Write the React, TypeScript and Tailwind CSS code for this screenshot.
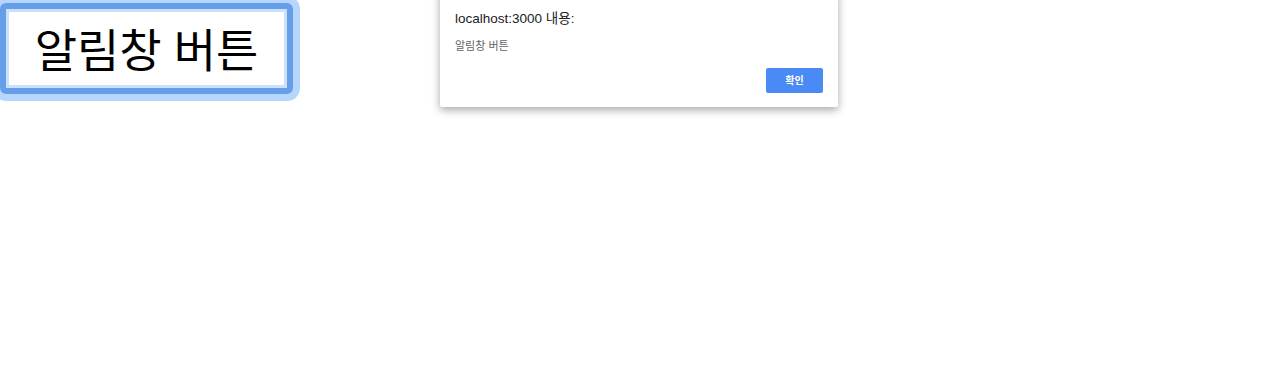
export default function App() {
  return (
    <div
      className="relative w-[1272px] h-[375px] overflow-hidden bg-white"
      style={{ fontFamily: '"Noto Sans", "Noto Sans CJK KR", sans-serif' }}
    >
      {/* focused button */}
      <div className="pt-[3px]">
        <button className="w-[293px] h-[91px] rounded-[6px] border-[6px] border-[#669fe9] bg-white shadow-[0_0_0_7px_#b6d6fc,inset_0_0_0_3px_#cbe0fa] flex items-center justify-center text-[46px] leading-none text-black">
          알림창 버튼
        </button>
      </div>

      {/* alert dialog */}
      <div
        className="absolute left-[440px] top-[-10px] w-[398px] h-[117px] bg-white rounded-[2px] shadow-[0_3px_8px_rgba(0,0,0,0.35)] px-[15px] pt-[21px]"
        style={{ fontFamily: '"Liberation Sans", "Noto Sans CJK KR", sans-serif' }}
      >
        <div className="text-[13.5px] text-[#202124] leading-[16px]">localhost:3000 내용:</div>
        <div className="mt-[12px] text-[11px] text-[#5f6368] leading-[14px]">알림창 버튼</div>
        <div className="flex justify-end mt-[15px]">
          <button className="w-[57px] h-[25px] rounded-[2px] bg-[#4a8af4] text-white text-[10px] font-bold leading-none">
            확인
          </button>
        </div>
      </div>
    </div>
  );
}
